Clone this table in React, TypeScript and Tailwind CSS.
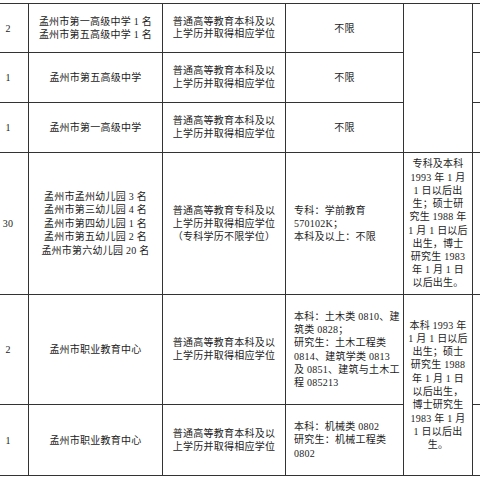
const font = { fontFamily: '"Liberation Serif", "Noto Sans CJK SC", serif' };

type Row = {
  num: string;
  unit: string[];
  edu: string[];
  major: string[];
  h: string;
};

const rows: Row[] = [
  {
    num: "2",
    unit: ["孟州市第一高级中学 1 名", "孟州市第五高级中学 1 名"],
    edu: ["普通高等教育本科及以", "上学历并取得相应学位"],
    major: ["不限"],
    h: "h-[49px]",
  },
  {
    num: "1",
    unit: ["孟州市第五高级中学"],
    edu: ["普通高等教育本科及以", "上学历并取得相应学位"],
    major: ["不限"],
    h: "h-[50px]",
  },
  {
    num: "1",
    unit: ["孟州市第一高级中学"],
    edu: ["普通高等教育本科及以", "上学历并取得相应学位"],
    major: ["不限"],
    h: "h-[50px]",
  },
];

const Lines = ({ lines }: { lines: string[] }) => (
  <>
    {lines.map((l, i) => (
      <div key={i}>{l}</div>
    ))}
  </>
);

const td = "border border-[#333] align-middle p-0 whitespace-nowrap overflow-hidden";

export default function App() {
  return (
    <div className="w-[480px] h-[480px] overflow-hidden bg-white pt-[3px]" style={font}>
      <table className="table-fixed border-collapse w-[545px] ml-[-13px] text-[10px] leading-[13px] text-[#1c1c1c] tracking-[0.25px]">
        <colgroup>
          <col className="w-[41px]" />
          <col className="w-[134px]" />
          <col className="w-[123px]" />
          <col className="w-[118px]" />
          <col className="w-[69px]" />
          <col className="w-[60px]" />
        </colgroup>
        <tbody>
          {rows.map((r, i) => (
            <tr key={i} className={r.h}>
              <td className={`${td} text-center`}>{r.num}</td>
              <td className={`${td} text-center`}>
                <Lines lines={r.unit} />
              </td>
              <td className={`${td} text-center leading-[12.5px]`}>
                <Lines lines={r.edu} />
              </td>
              <td className={`${td} text-center`}>
                <Lines lines={r.major} />
              </td>
              {i === 0 && <td rowSpan={3} className={td}></td>}
              <td className={td}></td>
            </tr>
          ))}
          <tr className="h-[142px]">
            <td className={`${td} text-center`}>30</td>
            <td className={`${td} text-center leading-[13.5px]`}>
              <Lines
                lines={[
                  "孟州市孟州幼儿园 3 名",
                  "孟州市第三幼儿园 4 名",
                  "孟州市第四幼儿园 1 名",
                  "孟州市第五幼儿园 2 名",
                  "孟州市第六幼儿园 20 名",
                ]}
              />
            </td>
            <td className={`${td} text-center leading-[13.3px]`}>
              <Lines lines={["普通高等教育专科及以", "上学历并取得相应学位", "（专科学历不限学位）"]} />
            </td>
            <td className={`${td} text-left pl-[8px] leading-[13px]`}>
              <Lines lines={["专科：学前教育", "570102K；", "本科及以上：不限"]} />
            </td>
            <td className={`${td} text-center leading-[13.2px]`}>
              <Lines
                lines={[
                  "专科及本科",
                  "1993 年 1 月",
                  "1 日以后出",
                  "生；硕士研",
                  "究生 1988 年",
                  "1 月 1 日以后",
                  "出生，博士",
                  "研究生 1983",
                  "年 1 月 1 日",
                  "以后出生。",
                ]}
              />
            </td>
            <td className={td}></td>
          </tr>
          <tr className="h-[110px]">
            <td className={`${td} text-center`}>2</td>
            <td className={`${td} text-center`}>孟州市职业教育中心</td>
            <td className={`${td} text-center leading-[12.5px]`}>
              <Lines lines={["普通高等教育本科及以", "上学历并取得相应学位"]} />
            </td>
            <td className={`${td} text-left pl-[8px] leading-[13.3px]`}>
              <Lines
                lines={[
                  "本科：土木类 0810、建",
                  "筑类 0828；",
                  "研究生：土木工程类",
                  "0814、建筑学类 0813",
                  "及 0851、建筑与土木工",
                  "程 085213",
                ]}
              />
            </td>
            <td rowSpan={2} className={`${td} text-center leading-[13.3px]`}>
              <Lines
                lines={[
                  "本科 1993 年",
                  "1 月 1 日以后",
                  "出生；硕士",
                  "研究生 1988",
                  "年 1 月 1 日",
                  "以后出生，",
                  "博士研究生",
                  "1983 年 1 月",
                  "1 日以后出",
                  "生。",
                ]}
              />
            </td>
            <td className={td}></td>
          </tr>
          <tr className="h-[71px]">
            <td className={`${td} text-center`}>1</td>
            <td className={`${td} text-center`}>孟州市职业教育中心</td>
            <td className={`${td} text-center leading-[13.5px]`}>
              <Lines lines={["普通高等教育本科及以", "上学历并取得相应学位"]} />
            </td>
            <td className={`${td} text-left pl-[8px] leading-[13.3px]`}>
              <Lines lines={["本科：机械类 0802", "研究生：机械工程类", "0802"]} />
            </td>
            <td className={td}></td>
          </tr>
        </tbody>
      </table>
    </div>
  );
}
